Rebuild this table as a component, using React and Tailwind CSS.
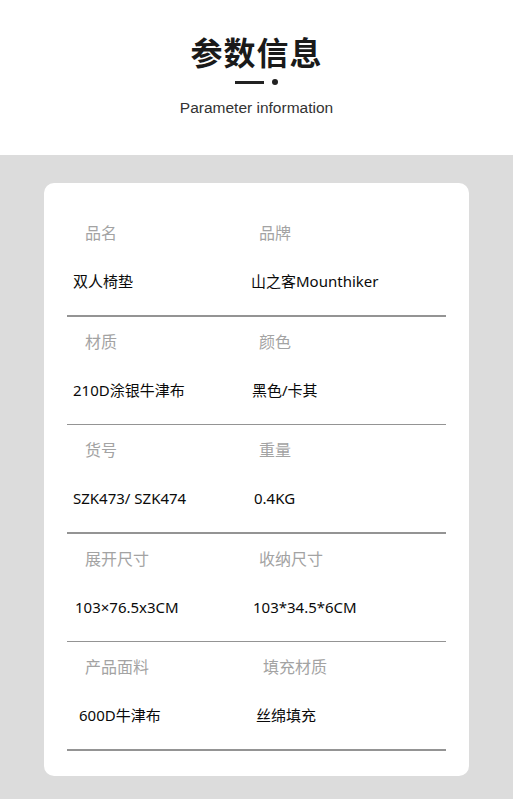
const rows = [
  {
    l: { label: '品名', value: '双人椅垫', vx: 'pl-[6px]' },
    r: { label: '品牌', value: '山之客Mounthiker', vx: 'pl-0' },
  },
  {
    l: { label: '材质', value: '210D涂银牛津布', vx: 'pl-[6px]' },
    r: { label: '颜色', value: '黑色/卡其', vx: 'pl-[1px]' },
  },
  {
    l: { label: '货号', value: 'SZK473/ SZK474', vx: 'pl-[6px]' },
    r: { label: '重量', value: '0.4KG', vx: 'pl-[3px]' },
  },
  {
    l: { label: '展开尺寸', value: '103×76.5x3CM', vx: 'pl-[8px]' },
    r: { label: '收纳尺寸', value: '103*34.5*6CM', vx: 'pl-[2px]' },
  },
  {
    l: { label: '产品面料', value: '600D牛津布', vx: 'pl-[12px]' },
    r: { label: '填充材质', value: '丝绵填充', vx: 'pl-[5px]', lx: 'pl-[12px]' },
  },
]

const font = { fontFamily: '"Noto Sans", "Noto Sans CJK SC", sans-serif' }

function Cell({ item, left }) {
  return (
    <div>
      <div className={`text-[16px] leading-6 text-[#a3a3a3] ${item.lx || (left ? 'pl-[18px]' : 'pl-[8px]')}`}>
        {item.label}
      </div>
      <div className={`mt-[25px] text-[15px] leading-[22px] text-[#0a0a0a] ${item.vx}`}>{item.value}</div>
    </div>
  )
}

export default function App() {
  return (
    <div className="w-[513px] h-[800px] bg-white" style={font}>
      {/* header */}
      <div className="h-[155px] pt-[31px] flex flex-col items-center">
        <h1
          className="text-[32px] leading-10 font-semibold text-[#1a1a1a] tracking-[1px]"
          style={{ fontFamily: '"Noto Sans CJK SC", sans-serif' }}
        >
          参数信息
        </h1>
        <div className="mt-[8px] flex items-center">
          <div className="w-[29px] h-[3px] bg-[#222]" />
          <div className="ml-[8px] w-[6px] h-[6px] rounded-full bg-[#222]" />
        </div>
        <p
          className="mt-[13px] text-[15.5px] leading-5 text-[#333]"
          style={{ fontFamily: '"Liberation Sans", Arial, sans-serif' }}
        >
          Parameter information
        </p>
      </div>

      {/* spec card */}
      <div className="bg-[#dcdcdc] pt-[28px] pb-[23px] px-[44px]">
        <div className="bg-white rounded-[10px] pt-[38px] pb-[25px] px-[23px]">
          {rows.map((row, i) => (
            <div key={i} className={i > 0 ? 'pt-[13px]' : ''}>
              <div className="grid grid-cols-[184px_1fr]">
                <Cell item={row.l} left />
                <Cell item={row.r} />
              </div>
              <div className="mt-[23px] h-[1.5px] bg-[#949494]" />
            </div>
          ))}
        </div>
      </div>
    </div>
  )
}
